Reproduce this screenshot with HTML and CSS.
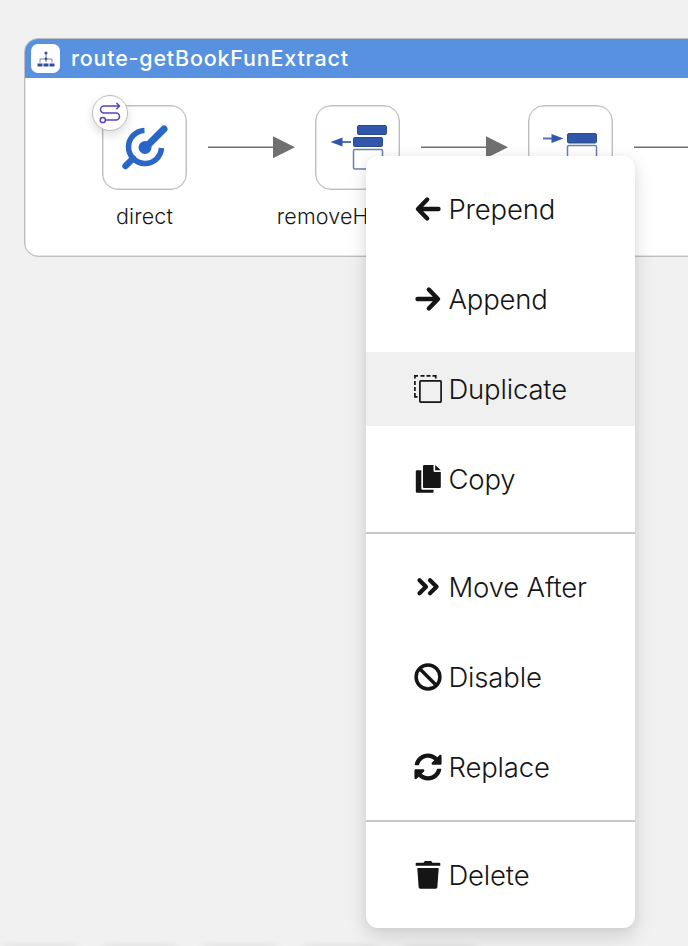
FILE: index.html
```
<!DOCTYPE html>
<html lang="en">
<head>
  <meta charset="UTF-8">
  <meta name="viewport" content="width=device-width, initial-scale=1.0">
  <title>Route designer</title>
  <link rel="stylesheet" href="styles.css">
</head>
<body>
  <div class="canvas">
    <section class="route">
      <header class="route-header">
        <span class="route-icon">
          <svg width="18" height="18" viewBox="0 0 18 18">
            <path d="M9 2v9M3 12.500V9h12v3.500M9 9v3" fill="none" stroke="#7086ad" stroke-width="1"/>
            <circle cx="9" cy="3" r="1.500" fill="#2f4f96"/>
            <circle cx="9" cy="8.800" r="1.300" fill="#2f4f96"/>
            <path d="M.5 13.500h5v3h-5zM6.500 13.500h5v3h-5zM12.500 13.500h5v3h-5z" fill="#2f4f96"/>
          </svg>
        </span>
        <h1>route-getBookFunExtract</h1>
      </header>
      <div class="steps">
        <div class="step">
          <div class="step-box">
            <svg width="85" height="85" viewBox="0 0 85 85">
              <path d="M42.500 25.500A16.500 16.500 0 1 0 59.500 43" fill="none" stroke="#2a66c8" stroke-width="5.500"/>
              <path d="M43 43L62 24" stroke="#2a66c8" stroke-width="7" stroke-linecap="round"/>
              <circle cx="43" cy="42.500" r="6.500" fill="#2a66c8"/>
              <path d="M31 53.500L23.500 61" stroke="#2a66c8" stroke-width="6.500" stroke-linecap="round"/>
            </svg>
            <span class="badge">
              <svg width="22" height="22" viewBox="0 0 22 22" fill="none" stroke="#5b42bd" stroke-width="1.5" stroke-linecap="round" stroke-linejoin="round">
                <path d="M20 4H5a3.500 3.500 0 0 0 0 7h12a3.500 3.500 0 0 1 0 7H6.500M17.800 1.300L20.500 4l-2.700 2.700"/>
                <circle cx="3.800" cy="18" r="2.600"/>
              </svg>
            </span>
          </div>
          <span class="step-name">direct</span>
        </div>
        <svg class="arrow" width="88" height="24" viewBox="0 0 88 24"><path d="M0 12.300h66" stroke="#707070" stroke-width="1.5"/><path d="M65 1.300l22 11-22 11z" fill="#707070"/></svg>
        <div class="step">
          <div class="step-box">
            <svg width="85" height="85" viewBox="0 0 85 85">
              <g fill="#3057a9" stroke="#2c4d80">
                <rect x="42.500" y="20.500" width="29" height="9" rx="1.500"/>
                <rect x="38.500" y="32.500" width="29" height="9" rx="1.500"/>
                <rect x="38.500" y="44.500" width="29" height="19.500" rx="1.500" fill="#fff" stroke="#6782a5" stroke-width="1.5"/>
              </g>
              <path d="M27 37h9" stroke="#5473b9" stroke-width="2.200"/>
              <path d="M15.500 37l12-4.500v9z" fill="#3057a9"/>
            </svg>
          </div>
          <span class="step-name">removeHeaders</span>
        </div>
        <svg class="arrow" width="88" height="24" viewBox="0 0 88 24"><path d="M0 12.300h66" stroke="#707070" stroke-width="1.5"/><path d="M65 1.300l22 11-22 11z" fill="#707070"/></svg>
        <div class="step">
          <div class="step-box">
            <svg width="85" height="85" viewBox="0 0 85 85">
              <rect x="39.500" y="28.500" width="29" height="9.500" rx="1.500" fill="#3057a9" stroke="#2c4d80"/>
              <rect x="39.500" y="40.500" width="29" height="19.500" rx="1.500" fill="#fff" stroke="#6782a5" stroke-width="1.5"/>
              <path d="M15 33.500h9" stroke="#5473b9" stroke-width="2.200"/>
              <path d="M35.500 33.500l-12-4.500v9z" fill="#3057a9"/>
            </svg>
          </div>
        </div>
        <svg class="arrow" width="88" height="24" viewBox="0 0 88 24"><path d="M0 12.300h66" stroke="#707070" stroke-width="1.5"/><path d="M65 1.300l22 11-22 11z" fill="#707070"/></svg>
      </div>
    </section>

    <ul class="menu">
      <li class="menu-item">
        <svg viewBox="0 0 28 28" fill="none" stroke="#151515" stroke-width="4.400" stroke-linecap="round" stroke-linejoin="round"><path d="M24.500 14H4.500M13.200 4.500L4 14l9.200 9.500"/></svg>
        <span>Prepend</span>
      </li>
      <li class="menu-item">
        <svg viewBox="0 0 28 28" fill="none" stroke="#151515" stroke-width="4.400" stroke-linecap="round" stroke-linejoin="round"><path d="M3.500 14h20M14.800 4.500L24 14l-9.200 9.500"/></svg>
        <span>Append</span>
      </li>
      <li class="menu-item active">
        <svg viewBox="0 0 28 28" fill="none" stroke="#151515" stroke-width="1.700">
          <rect x="5.900" y="5.900" width="21.200" height="21.200" rx=".8"/>
          <path d="M.9 3.500V.9H4M6.500.9h4M12.500.9h4M18.500.9h3.300V3.500M.9 6v4M.9 12v4M.9 18v3.800h2.600"/>
        </svg>
        <span>Duplicate</span>
      </li>
      <li class="menu-item">
        <svg viewBox="0 0 28 28" fill="#151515">
          <path d="M10.300 0H19.500v5.700c0 .7.500 1.200 1.200 1.200h6.100v14.800c0 .7-.6 1.300-1.300 1.300H10.300C9.600 23 9 22.400 9 21.700V1.300C9 .6 9.600 0 10.300 0z"/>
          <path d="M21.200 0l5.600 5.300h-5.600z"/>
          <path d="M7.300 5.200v18.200c0 .8.600 1.300 1.300 1.300h11v1.800c0 .8-.6 1.300-1.300 1.300H3.100c-.7 0-1.300-.6-1.300-1.300V6.500c0-.7.600-1.300 1.300-1.300z"/>
        </svg>
        <span>Copy</span>
      </li>
      <li class="divider"></li>
      <li class="menu-item">
        <svg viewBox="0 0 28 28" fill="none" stroke="#151515" stroke-width="4.200" stroke-linecap="round" stroke-linejoin="round"><path d="M5.500 7.300l6.500 6.500-6.500 6.500M16 7.300l6.600 6.500-6.600 6.500"/></svg>
        <span>Move After</span>
      </li>
      <li class="menu-item">
        <svg viewBox="0 0 28 28" fill="none" stroke="#151515" stroke-width="3.500"><circle cx="14" cy="14" r="11.900"/><path d="M5.500 5.500l17 17"/></svg>
        <span>Disable</span>
      </li>
      <li class="menu-item">
        <svg viewBox="0 0 512 512" fill="#151515"><path d="M370.720 133.280C339.458 104.008 298.888 87.962 255.848 88c-77.458.068-144.328 53.178-162.791 126.850-1.344 5.363-6.122 9.150-11.651 9.150H24.103c-7.498 0-13.194-6.807-11.807-14.176C33.933 94.924 134.813 8 256 8c66.448 0 126.791 26.136 171.315 68.685L463.030 40.970C478.149 25.851 504 36.559 504 57.941V192c0 13.255-10.745 24-24 24H345.941c-21.382 0-32.090-25.851-16.971-40.971l41.750-41.749zM32 296h134.059c21.382 0 32.090 25.851 16.971 40.971l-41.750 41.750c31.262 29.273 71.835 45.319 114.876 45.280 77.418-.07 144.315-53.144 162.787-126.849 1.344-5.363 6.122-9.150 11.651-9.150h57.304c7.498 0 13.194 6.807 11.807 14.176C478.067 417.076 377.187 504 256 504c-66.448 0-126.791-26.136-171.315-68.685L48.970 471.030C33.851 486.149 8 475.441 8 454.059V320c0-13.255 10.745-24 24-24z"/></svg>
        <span>Replace</span>
      </li>
      <li class="divider"></li>
      <li class="menu-item">
        <svg viewBox="0 0 28 28" fill="#151515">
          <path d="M2.600 1.700h7L10.300.5c.2-.3.500-.5.900-.5h5.600c.4 0 .7.200.9.500l.7 1.200h7c.5 0 .9.400.9.900v2.200H1.700V2.600c0-.5.400-.9.900-.9z"/>
          <path d="M3.300 7h21.400l-1.300 18.700c-.1 1.300-1 2.100-2.200 2.100H6.800c-1.200 0-2.100-.8-2.200-2.100z"/>
        </svg>
        <span>Delete</span>
      </li>
    </ul>

    <div class="controls"><i></i><i></i><i></i><i></i><i></i></div>
  </div>
</body>
</html>
```

FILE: styles.css
```
* { margin: 0; padding: 0; box-sizing: border-box; }
body {
  font-family: Inter, "Open Sans", sans-serif;
  background: #f1f1f1;
  color: #151515;
  overflow: hidden;
}
svg { display: block; flex: none; }
.canvas {
  position: relative;
  height: 946px;
  padding: 38px 0 0 24px;
  overflow: hidden;
}
.route {
  width: 760px;
  height: 219px;
  background: #fff;
  border: 1px solid #bcbec0;
  border-radius: 14px;
  box-shadow: inset 0 0 0 0.500px #c7c7c7;
  overflow: hidden;
}
.route-header {
  display: flex;
  align-items: center;
  gap: 11px;
  height: 39px;
  padding-left: 6px;
  background: #5891e0;
  color: #fff;
}
.route-icon {
  display: flex;
  align-items: center;
  justify-content: center;
  width: 29px;
  height: 29px;
  background: #fff;
  border-radius: 7px;
}
h1 {
  font-size: 21.500px;
  font-weight: 500;
  line-height: 28px;
  letter-spacing: 0.800px;
  margin-top: -1px;
}
.steps {
  display: flex;
  padding: 27px 0 0 77px;
}
.step {
  display: flex;
  flex-direction: column;
  align-items: center;
  gap: 12px;
  width: 85px;
  flex: none;
}
.step-box {
  position: relative;
  width: 85px;
  height: 85px;
  border: 1px solid #bcbec0;
  border-radius: 16px;
  box-shadow: inset 0 0 0 0.500px #c7c7c7;
}
.step-box > svg { margin: -1px; }
.badge {
  position: absolute;
  top: -11px;
  left: -11px;
  display: flex;
  align-items: center;
  justify-content: center;
  width: 36px;
  height: 36px;
  background: #fff;
  border: 1px solid #bcbec0;
  border-radius: 50%;
  box-shadow: 0 4px 10px rgba(0,0,0,0.14);
}
.step-name {
  font-size: 21.500px;
  font-weight: 350;
  line-height: 28px;
  letter-spacing: 0.150px;
  white-space: nowrap;
}
.arrow { margin: 30px 19px 0 21px; }
.menu {
  position: absolute;
  top: 156px;
  left: 366px;
  width: 269px;
  display: flex;
  flex-direction: column;
  gap: 16px;
  padding: 16px 0;
  background: #fff;
  border-radius: 12px;
  box-shadow: 0 8px 20px rgba(0,0,0,0.14), 0 0 8px rgba(0,0,0,0.05);
  list-style: none;
}
.menu-item {
  display: flex;
  align-items: center;
  gap: 6.500px;
  height: 74px;
  padding-left: 48px;
  font-size: 27.500px;
  font-weight: 300;
  letter-spacing: -0.180px;
  white-space: nowrap;
}
.menu-item svg { width: 28px; height: 28px; }
.menu-item.active { background: #f0f0f0; }
.divider { height: 2px; background: #c7c7c7; }
/* floating buttons under the lower edge, only their shadow is visible */
.controls {
  position: absolute;
  top: 948px;
  left: 0;
  display: flex;
  gap: 20px;
}
.controls i {
  width: 80px;
  height: 40px;
  border-radius: 10px;
  box-shadow: 0 0 10px rgba(0,0,0,0.14);
}
```
